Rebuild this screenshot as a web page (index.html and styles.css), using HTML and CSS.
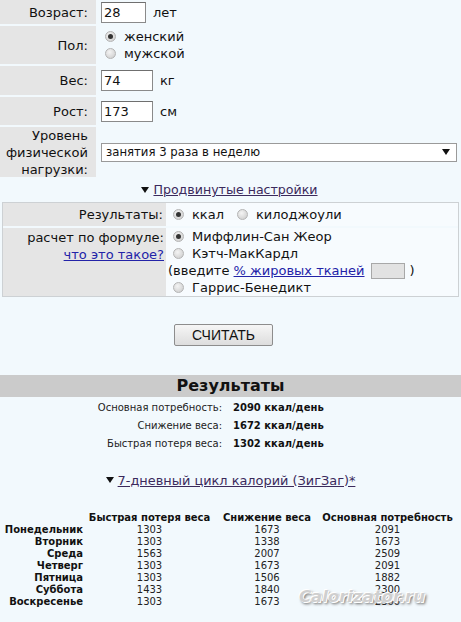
FILE: index.html
```html
<!DOCTYPE html>
<html lang="ru">
<head>
<meta charset="utf-8">
<title>Калькулятор калорий</title>
<link rel="stylesheet" href="styles.css">
</head>
<body>
<div class="page">
  <div class="main-form">
    <div class="lbl">Возраст:</div>
    <div class="val"><input class="inp w45" type="text" value="28"><span class="unit">лет</span></div>

    <div class="lbl">Пол:</div>
    <div class="val stack">
      <div class="opt"><span class="radio on"></span>женский</div>
      <div class="opt"><span class="radio"></span>мужской</div>
    </div>

    <div class="lbl">Вес:</div>
    <div class="val"><input class="inp w52" type="text" value="74"><span class="unit">кг</span></div>

    <div class="lbl">Рост:</div>
    <div class="val"><input class="inp w52" type="text" value="173"><span class="unit">см</span></div>

    <div class="lbl multi">Уровень<br>физической<br>нагрузки:</div>
    <div class="val"><div class="select"><span>занятия 3 раза в неделю</span><span class="arrow"></span></div></div>
  </div>

  <div class="toggle"><span class="tri"></span><a class="visited" href="#">Продвинутые настройки</a></div>

  <div class="adv">
    <div class="alb">Результаты:</div>
    <div class="aval row">
      <div class="opt"><span class="radio on"></span>ккал</div>
      <div class="opt gap"><span class="radio"></span>килоджоули</div>
    </div>
    <div class="alb top">расчет по формуле:<br><a class="link" href="#">что это такое?</a></div>
    <div class="aval lines">
      <div class="opt"><span class="radio on"></span>Миффлин-Сан Жеор</div>
      <div class="opt"><span class="radio"></span>Кэтч-МакКардл</div>
      <div class="opt plain">(введите&nbsp;<a class="link" href="#">% жировых тканей</a><span class="fat"></span>)</div>
      <div class="opt"><span class="radio"></span>Гаррис-Бенедикт</div>
    </div>
  </div>

  <div class="btn-row"><button class="btn" type="button">СЧИТАТЬ</button></div>

  <div class="res-head">Результаты</div>
  <div class="res">
    <div class="rl">Основная потребность:</div><div class="rv">2090 ккал/день</div>
    <div class="rl">Снижение веса:</div><div class="rv">1672 ккал/день</div>
    <div class="rl">Быстрая потеря веса:</div><div class="rv">1302 ккал/день</div>
  </div>

  <div class="toggle zz"><span class="tri"></span><a class="visited" href="#">7-дневный цикл калорий (ЗигЗаг)*</a></div>

  <table class="cycle">
    <colgroup><col class="c0"><col class="c1"><col class="c2"><col class="c3"></colgroup>
    <thead>
      <tr><th></th><th>Быстрая потеря веса</th><th>Снижение веса</th><th>Основная потребность</th></tr>
    </thead>
    <tbody>
      <tr><th>Понедельник</th><td>1303</td><td>1673</td><td>2091</td></tr>
      <tr><th>Вторник</th><td>1303</td><td>1338</td><td>1673</td></tr>
      <tr><th>Среда</th><td>1563</td><td>2007</td><td>2509</td></tr>
      <tr><th>Четверг</th><td>1303</td><td>1673</td><td>2091</td></tr>
      <tr><th>Пятница</th><td>1303</td><td>1506</td><td>1882</td></tr>
      <tr><th>Суббота</th><td>1433</td><td>1840</td><td>2300</td></tr>
      <tr><th>Воскресенье</th><td>1303</td><td>1673</td><td>2300</td></tr>
    </tbody>
  </table>

  <div class="watermark">Calorizator.ru</div>
</div>
</body>
</html>
```

FILE: styles.css
```css
html, body {
  margin: 0;
  padding: 0;
}
body {
  background: #f2f9fd;
  color: #111;
  font-family: "DejaVu Sans", Verdana, sans-serif;
  font-size: 13px;
  width: 461px;
  height: 622px;
  overflow: hidden;
}
.page {
  position: relative;
  height: 622px;
}

/* main form */
.main-form {
  display: grid;
  grid-template-columns: 96px 1fr;
  grid-template-rows: 24px 38px 29px 28px 50px;
  row-gap: 2px;
}
.lbl {
  background: #e5e5e5;
  display: flex;
  align-items: center;
  justify-content: flex-end;
  padding-right: 8px;
  text-align: right;
  line-height: 17px;
}
.lbl.multi { padding-top: 1px; }
.val {
  display: flex;
  align-items: center;
  padding-left: 5px;
}
.val.stack {
  flex-direction: column;
  align-items: flex-start;
  justify-content: center;
  padding-left: 9px;
}
.inp {
  box-sizing: border-box;
  height: 21px;
  border: 1px solid #8a8a8a;
  border-top-color: #6f6f6f;
  background: #fff;
  font-family: "DejaVu Sans", Verdana, sans-serif;
  font-size: 13px;
  color: #111;
  padding: 0 2px;
  margin: 0;
  outline: none;
}
.w45 { width: 45px; }
.w52 { width: 52px; }
.unit { margin-left: 7px; }

.opt {
  display: flex;
  align-items: center;
  line-height: 17px;
  white-space: nowrap;
}
.radio {
  box-sizing: border-box;
  width: 11px;
  height: 11px;
  border-radius: 50%;
  border: 1px solid #b4b4b4;
  background: radial-gradient(circle at 40% 35%, #f4f4f4 0%, #d6d6d6 70%, #c4c4c4 100%);
  margin-right: 8px;
  display: flex;
  align-items: center;
  justify-content: center;
  flex: none;
}
.radio.on::after {
  content: "";
  width: 5px;
  height: 5px;
  border-radius: 50%;
  background: #333;
}

.select {
  box-sizing: border-box;
  width: 356px;
  height: 19px;
  border: 1px solid #9a9a9a;
  background: #fff;
  display: flex;
  align-items: center;
  justify-content: space-between;
  padding: 0 6px 0 4px;
  font-size: 11.7px;
}
.arrow {
  width: 0;
  height: 0;
  border-left: 4px solid transparent;
  border-right: 4px solid transparent;
  border-top: 6px solid #111;
}

/* toggles */
.toggle {
  display: flex;
  align-items: center;
  justify-content: center;
  height: 25px;
  font-size: 12.6px;
  padding-right: 2px;
}
.tri {
  width: 0;
  height: 0;
  border-left: 4px solid transparent;
  border-right: 4px solid transparent;
  border-top: 6px solid #111;
  margin-right: 4px;
}
a.visited {
  color: #3b2a5c;
  text-decoration: underline;
}
a.link {
  color: #2323a8;
  text-decoration: underline;
}

/* advanced box */
.adv {
  margin: 0 2px;
  border: 1px solid #cdd1d4;
  background: #f2f9fd;
  display: grid;
  grid-template-columns: 163px 1fr;
  grid-template-rows: 23px 68px;
  row-gap: 2px;
}
.alb {
  background: #e5e5e5;
  text-align: right;
  padding-right: 3px;
  display: flex;
  align-items: center;
  justify-content: flex-end;
  line-height: 17px;
}
.alb.top {
  display: block;
  padding-top: 1px;
  padding-right: 2px;
}
.aval {
  background: #f7fbfe;
  padding-left: 7px;
}
.aval.row {
  display: flex;
  align-items: center;
}
.opt.gap { margin-left: 13px; }
.aval.lines {
  display: flex;
  flex-direction: column;
  padding-top: 0;
  padding-left: 7px;
}
.opt.plain { margin-left: -5px; }
.fat {
  display: inline-block;
  box-sizing: border-box;
  width: 34px;
  height: 16px;
  border: 1px solid #a8a8a8;
  background: #e2e2e2;
  margin: 0 5px 0 6px;
}

/* button */
.btn-row {
  display: flex;
  padding: 27px 0 0 174px;
  height: 48px;
}
.btn {
  box-sizing: border-box;
  width: 99px;
  height: 22px;
  border: 1px solid #8d8d8d;
  border-radius: 2px;
  background: linear-gradient(#f6f6f6, #dddddd);
  font-family: "Liberation Sans", Arial, sans-serif;
  font-size: 14px;
  color: #111;
  padding: 0;
}

/* results */
.res-head {
  margin-top: 3px;
  background: #cbcbcb;
  height: 22px;
  line-height: 22px;
  text-align: center;
  font-weight: bold;
  font-size: 16px;
  color: #111;
}
.res {
  display: grid;
  grid-template-columns: 222px auto;
  column-gap: 11px;
  padding-top: 2px;
  font-size: 10px;
  line-height: 18px;
}
.rl {
  text-align: right;
  color: #222;
}
.rv {
  font-weight: bold;
}

.toggle.zz {
  margin-top: 17px;
  height: 20px;
  font-size: 12.9px;
  padding-right: 0;
}

.cycle {
  margin-top: 22px;
  border-collapse: collapse;
  table-layout: fixed;
  width: 454px;
  font-size: 10px;
}
.cycle .c0 { width: 86px; }
.cycle .c1 { width: 127px; }
.cycle .c2 { width: 108px; }
.cycle .c3 { width: 133px; }
.cycle th,
.cycle td {
  padding: 0;
  height: 12px;
  line-height: 12px;
  white-space: nowrap;
}
.cycle thead th {
  text-align: center;
  font-weight: bold;
}
.cycle tbody th {
  text-align: right;
  padding-right: 3px;
  font-weight: bold;
}
.cycle td {
  text-align: center;
  color: #222;
}

.watermark {
  position: absolute;
  left: 299px;
  top: 587px;
  font-family: "DejaVu Sans", Verdana, sans-serif;
  font-weight: bold;
  font-style: italic;
  font-size: 16.5px;
  color: #cfcfcf;
  text-shadow: 1px 1px 0 #fff, -1px -1px 0 #fff, 2px 2px 3px #666;
}
```
